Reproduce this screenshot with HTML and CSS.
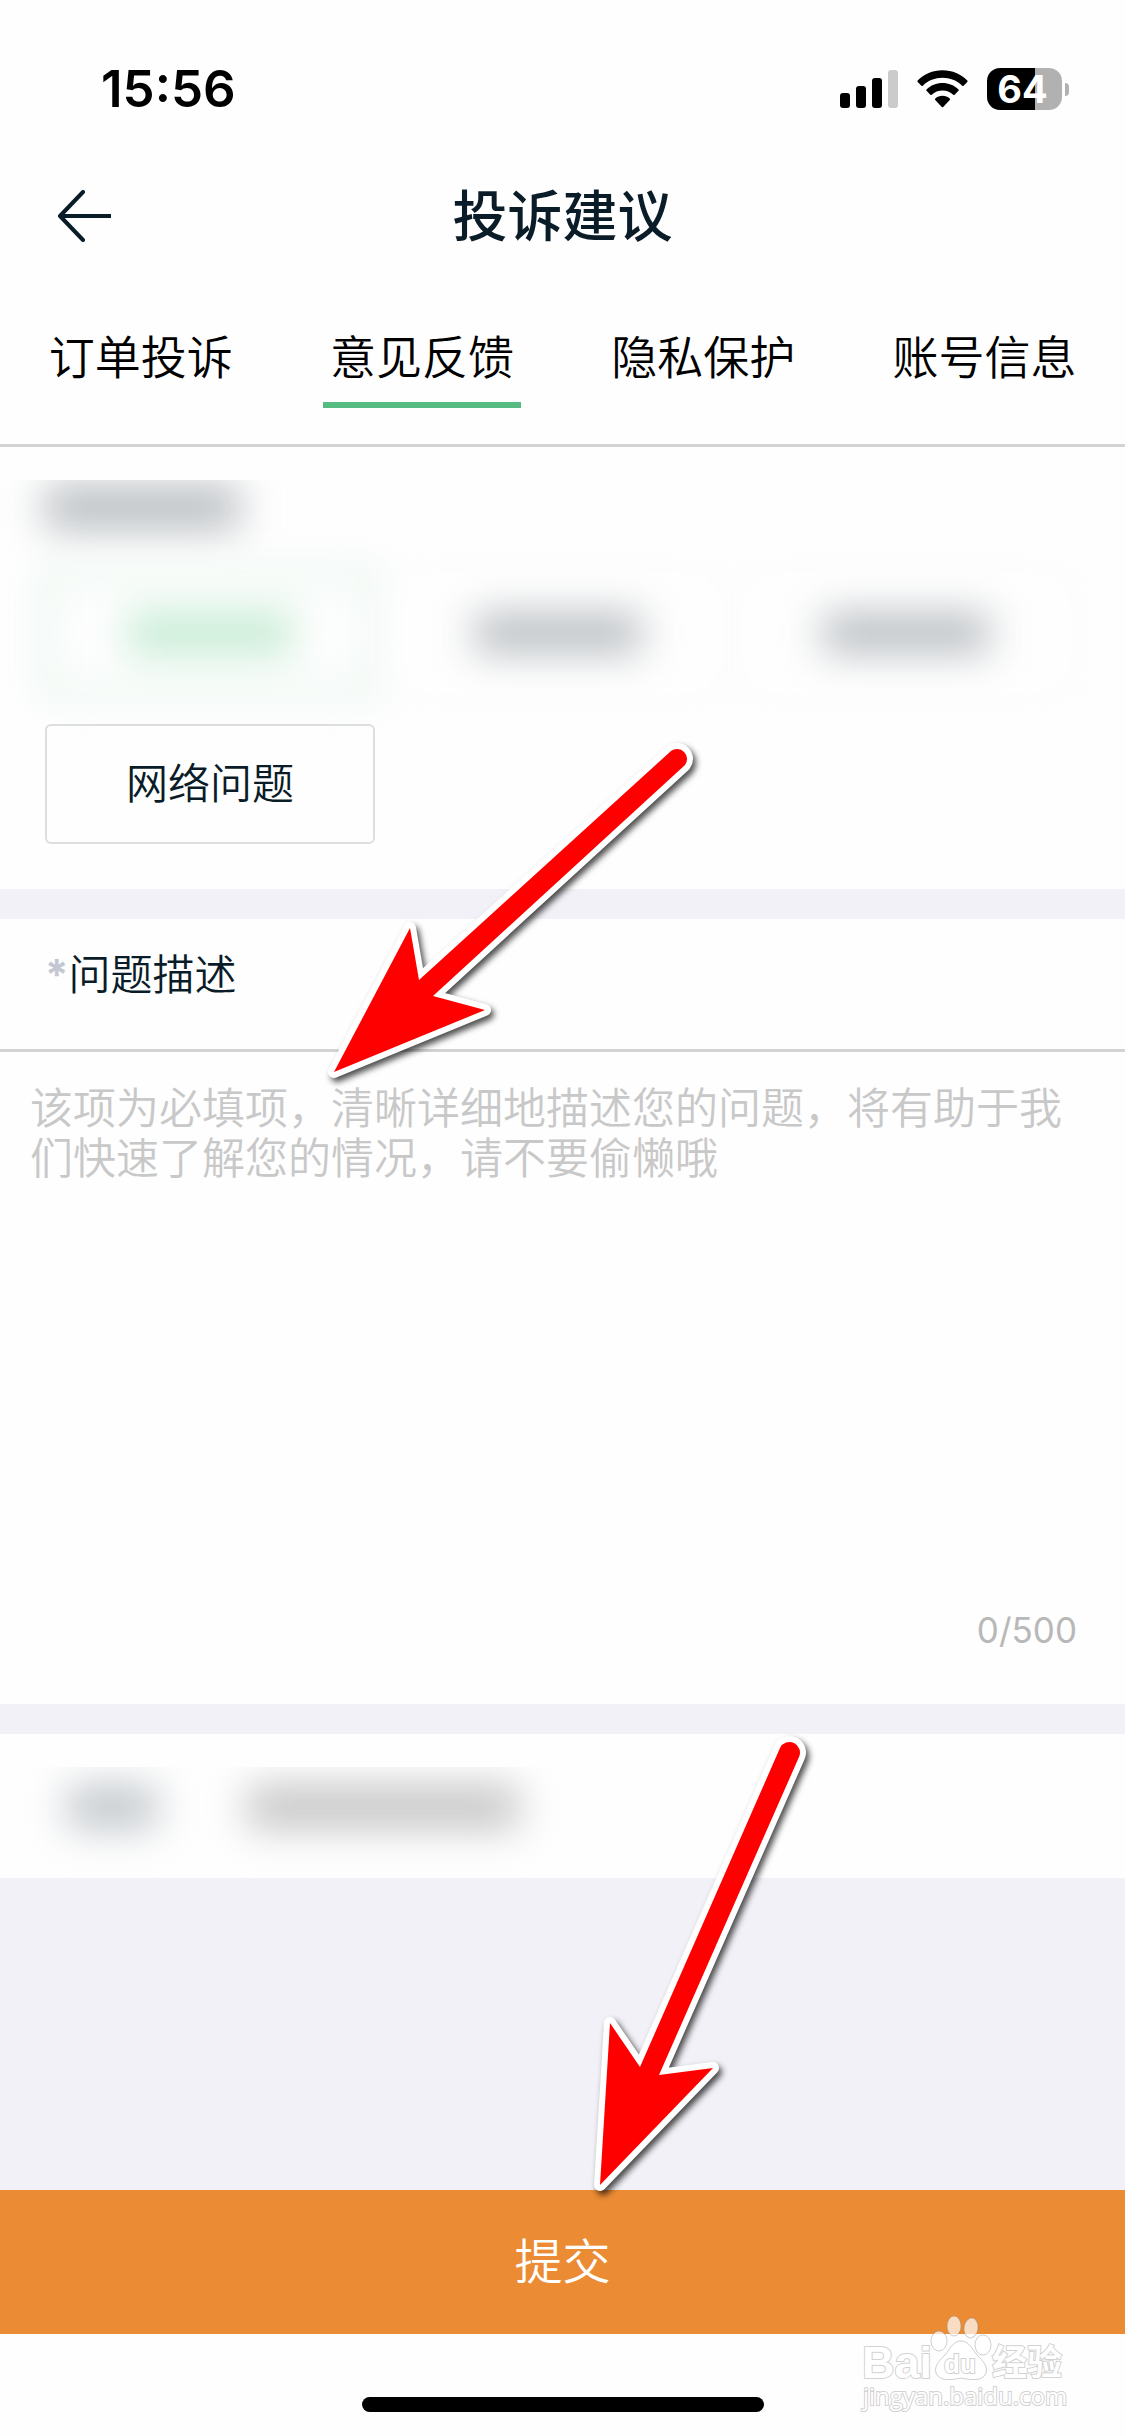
FILE: index.html
```html
<!DOCTYPE html>
<html lang="zh-CN">
<head>
<meta charset="utf-8">
<meta name="viewport" content="width=device-width, initial-scale=1">
<title>投诉建议</title>
<link rel="stylesheet" href="styles.css">
</head>
<body>
<div class="page">
  <div class="status">
    <span class="status-time">15:56</span>
    <div class="status-icons">
      <svg class="icon-signal" viewBox="0 0 58 38" aria-hidden="true">
        <rect x="0" y="23" width="10" height="15" rx="3"/>
        <rect x="16" y="16" width="10" height="22" rx="3"/>
        <rect x="32" y="8" width="10" height="30" rx="3"/>
        <rect x="48" y="0" width="10" height="38" rx="3" fill="#cbcbcb"/>
      </svg>
      <svg class="icon-wifi" viewBox="0 0 52 38" aria-hidden="true">
        <path d="M26 0C36 0 45 4 51.3 10.4a1 1 0 0 1 0 1.400L47.500 15.600a1 1 0 0 1-1.400 0C40.600 10.400 33.600 7.600 26 7.600S11.400 10.400 5.900 15.600a1 1 0 0 1-1.400 0L.7 11.800a1 1 0 0 1 0-1.400C7 4 16 0 26 0Z"/>
        <path d="M26 13c6.300 0 12 2.400 16.300 6.400a1 1 0 0 1 0 1.500l-3.900 3.900a1 1 0 0 1-1.400 0C34 22.100 30.200 20.500 26 20.500s-8 1.600-11 4.300a1 1 0 0 1-1.400 0l-3.900-3.900a1 1 0 0 1 0-1.500C14 15.400 19.700 13 26 13Z"/>
        <path d="M26 26c2.800 0 5.300 1 7.300 2.600a1 1 0 0 1 .1 1.500L26.700 37.300a1 1 0 0 1-1.400 0l-6.700-7.200a1 1 0 0 1 .1-1.500C20.700 27 23.200 26 26 26Z"/>
      </svg>
      <div class="battery"><span class="battery-level">64</span><i class="battery-tip"></i></div>
    </div>
  </div>

  <header class="nav">
    <button class="back" type="button" aria-label="返回">
      <svg viewBox="0 0 54 52" aria-hidden="true"><path d="M26 2 3 26l23 24M3 26h51"/></svg>
    </button>
    <h1 class="title">投诉建议</h1>
  </header>

  <nav class="tabs">
    <a class="tab" href="#order">订单投诉</a>
    <a class="tab tab-active" href="#feedback" aria-current="page">意见反馈</a>
    <a class="tab" href="#privacy">隐私保护</a>
    <a class="tab" href="#account">账号信息</a>
  </nav>

  <main class="form">
    <section class="panel types">
      <div class="veil types-veil">
        <div class="smudge smudge-heading"></div>
        <div class="chips">
          <button class="chip chip-on smudged" type="button" aria-label="已选类型"><i class="smudge-word"></i></button>
          <button class="chip smudged" type="button" aria-label="类型二"><i class="smudge-word"></i></button>
          <button class="chip smudged" type="button" aria-label="类型三"><i class="smudge-word"></i></button>
          <button class="chip" type="button">网络问题</button>
        </div>
      </div>
    </section>

    <section class="panel describe">
      <label class="describe-label" for="desc"><span class="star">*</span>问题描述</label>
      <textarea class="describe-input" id="desc" maxlength="500" placeholder="该项为必填项，清晰详细地描述您的问题，将有助于我们快速了解您的情况，请不要偷懒哦"></textarea>
      <div class="counter">0/500</div>
    </section>

    <section class="panel contact">
      <div class="veil contact-veil">
        <div class="smudge smudge-label"></div>
        <div class="smudge smudge-value"></div>
      </div>
    </section>
  </main>

  <button class="submit" type="submit">提交</button>
  <footer class="home"><div class="home-bar"></div></footer>

  <svg class="arrow arrow-describe" viewBox="320 730 400 370" aria-hidden="true">
    <path d="M334 1072 410 928 419 980 671 751A10 10 0 0 1 685 765L433 996 485 1010Z"/>
  </svg>
  <svg class="arrow arrow-submit" viewBox="580 1720 260 490" aria-hidden="true">
    <path d="M600 2185 610 2023 640 2067 780 1748A10 10 0 0 1 799 1757L659 2075 713 2068Z"/>
  </svg>
  <svg class="watermark" viewBox="0 0 220 110" aria-hidden="true">
    <g class="wm-paw">
      <ellipse cx="82" cy="23" rx="8" ry="10"/>
      <ellipse cx="97" cy="8" rx="7" ry="10"/>
      <ellipse cx="114" cy="10" rx="7" ry="10" transform="rotate(8 114 10)"/>
      <ellipse cx="126" cy="27" rx="8" ry="10"/>
      <path d="M104 23c8 0 11 8 16 14 6 6 11 11 9 18-3 7-10 8-25 5-14 3-22 2-25-5-2-7 3-12 9-18 5-6 8-14 16-14Z"/>
    </g>
    <text class="wm-text wm-bai" x="5" y="60">Bai</text>
    <text class="wm-text wm-du" x="87" y="55">du</text>
    <text class="wm-text wm-exp" x="135" y="57">经验</text>
    <text class="wm-text wm-url" x="6" y="87">jingyan.baidu.com</text>
  </svg>
</div>
</body>
</html>
```

FILE: styles.css
```css
:root {
  --ink: #0a1c28;
  --paper: #fefefe;
  --band: #f2f1f7;
  --rule: #d3d3d3;
  --green: #55bb80;
}

* { box-sizing: border-box; }

body {
  margin: 0;
  background: var(--paper);
  color: var(--ink);
  font-family: Inter, "Noto Sans CJK SC", sans-serif;
  font-weight: 350;
}

button, textarea { font: inherit; color: inherit; }

.page {
  position: relative;
  display: flex;
  flex-direction: column;
  min-height: 100vh;
  overflow: hidden;
}

/* Status bar */
.status {
  display: flex;
  justify-content: space-between;
  align-items: flex-start;
  height: 132px;
  padding: 45px 56px 0 101px;
  color: #000;
}
.status-time { font-size: 51px; line-height: 88px; font-weight: 600; }
.status-icons { display: flex; align-items: center; gap: 19px; height: 88px; }
.icon-signal { width: 58px; height: 38px; }
.icon-wifi { width: 51px; height: 38px; }
.battery { display: flex; align-items: center; gap: 3px; }
.battery-level {
  width: 75px;
  height: 42px;
  padding-right: 4px;
  border-radius: 13px;
  background: linear-gradient(90deg, #000 64%, #b1b1b1 64%);
  color: #fff;
  font-size: 38px;
  line-height: 42px;
  font-weight: 700;
  text-align: center;
}
.battery-tip { width: 4px; height: 13px; border-radius: 0 4px 4px 0; background: #b1b1b1; }

/* Title bar */
.nav {
  display: grid;
  grid-template-columns: 1fr auto 1fr;
  align-items: center;
  height: 168px;
  padding: 0 57px;
}
.back { justify-self: start; width: 54px; height: 52px; padding: 0; border: 0; background: none; }
.back svg { display: block; width: 54px; height: 52px; fill: none; stroke: var(--ink); stroke-width: 4; stroke-linecap: round; stroke-linejoin: round; }
.title { margin: 0; font-size: 55px; line-height: 80px; font-weight: 500; }

/* Tabs */
.tabs {
  display: grid;
  grid-template-columns: repeat(4, 1fr);
  justify-items: center;
  align-items: start;
  height: 147px;
  padding-top: 20px;
  border-bottom: 3px solid var(--rule);
}
.tab {
  padding: 0 7px 8px;
  border-bottom: 6px solid transparent;
  color: #000;
  font-size: 46px;
  line-height: 74px;
  text-decoration: none;
}
.tab-active { border-bottom-color: var(--green); }

/* Form */
.form { display: flex; flex-direction: column; flex: 1; gap: 30px; background: var(--band); }
.panel { background: var(--paper); }
.veil { overflow: hidden; }
.smudge, .smudged { filter: blur(20px); }
.smudge { background: #b5babe; }

.types { padding: 33px 0 45px; }
.types-veil { padding: 6px 54px 0 45px; }
.smudge-heading { width: 194px; height: 42px; }
.chips { display: grid; grid-template-columns: repeat(3, 1fr); gap: 31px 18px; padding-top: 45px; }
.chip {
  display: flex;
  align-items: center;
  justify-content: center;
  height: 120px;
  border: 2px solid #dedede;
  border-radius: 6px;
  background: var(--paper);
  font-size: 42px;
  line-height: 60px;
}
.smudged { border-color: #f4f4f4; }
.chip-on { border: 2px solid var(--green); }
.smudge-word { width: 166px; height: 38px; background: #b5babe; }
.chip-on .smudge-word { background: #c0ead0; }

.describe-label {
  display: flex;
  height: 133px;
  padding: 26px 45px 0;
  border-bottom: 3px solid var(--rule);
  font-size: 42px;
  line-height: 60px;
}
.star { color: #c3c7d2; font-weight: 700; }
.describe-input {
  display: block;
  width: 100%;
  height: 530px;
  padding: 31px 30px;
  border: 0;
  outline: 0;
  resize: none;
  background: none;
  font-size: 43px;
  line-height: 50px;
}
.describe-input::placeholder { color: #c8c8c8; opacity: 1; }
.counter { height: 122px; padding: 22px 48px 0; color: #b8b8b8; font-size: 35px; line-height: 52px; font-weight: 400; text-align: right; }

.contact { height: 144px; padding-top: 33px; }
.contact-veil { display: flex; gap: 92px; height: 111px; padding: 20px 0 0 68px; }
.contact .smudge { height: 40px; }
.smudge-label { width: 88px; }
.smudge-value { width: 270px; }
.contact .smudge-label { background: #bcc2c7; }
.contact .smudge-value { background: #c0c0c0; }

.submit {
  height: 144px;
  border: 0;
  background: #eb8b34;
  color: #fff;
  font-size: 48px;
  line-height: 72px;
}
.home { display: flex; justify-content: center; height: 102px; padding-top: 63px; }
.home-bar { width: 402px; height: 15px; border-radius: 8px; background: #000; }

/* Pointers drawn over the page */
.arrow {
  position: absolute;
  overflow: visible;
  fill: #f00;
  stroke: #fff;
  stroke-width: 12px;
  stroke-linejoin: round;
  paint-order: stroke;
  filter: drop-shadow(3px 4px 3px rgba(0, 0, 0, .7));
  pointer-events: none;
}
.arrow-describe { left: 320px; top: 730px; width: 400px; height: 370px; }
.arrow-submit { left: 580px; bottom: 226px; width: 260px; height: 490px; }

.watermark { position: absolute; right: 48px; bottom: 8px; width: 220px; height: 110px; overflow: visible; }
.wm-paw { fill: rgba(255, 255, 255, .7); stroke: rgba(120, 120, 120, .35); stroke-width: 1px; }
.wm-text {
  fill: #fff;
  stroke: #d2d2d2;
  stroke-width: 2px;
  paint-order: stroke;
  font-family: "Liberation Sans", "Noto Sans CJK SC", sans-serif;
  font-weight: 700;
}
.wm-bai { font-size: 45px; }
.wm-du { font-size: 26px; }
.wm-exp { font-size: 35px; }
.wm-url { font-family: "Open Sans", sans-serif; font-size: 24px; font-weight: 400; }
```
